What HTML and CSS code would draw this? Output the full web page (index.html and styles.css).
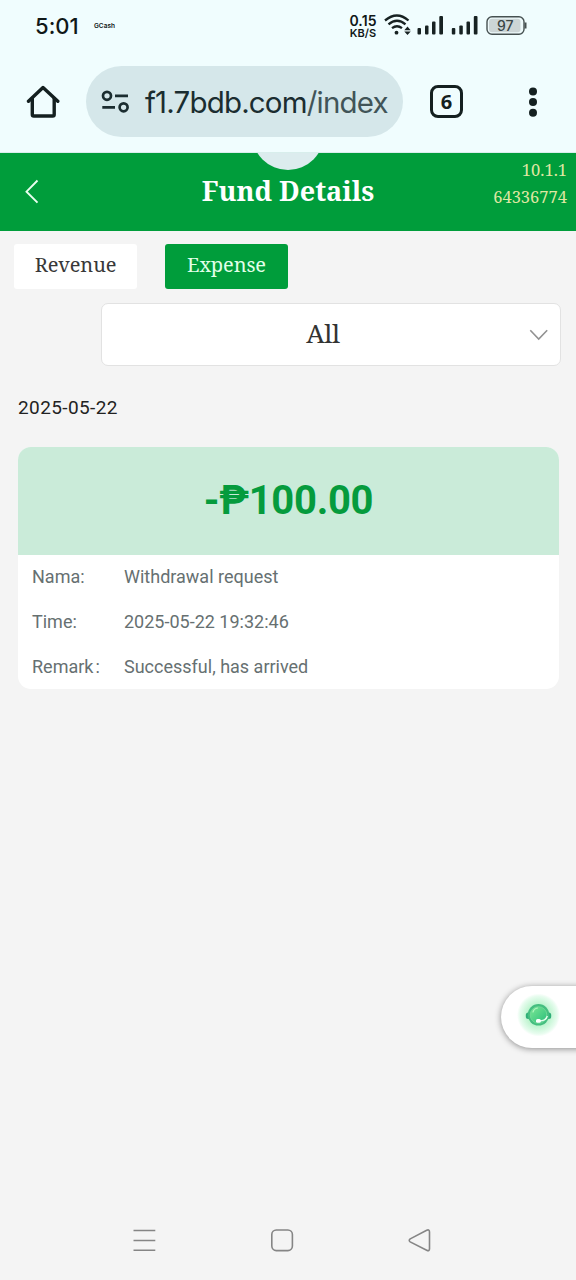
FILE: index.html
```html
<!DOCTYPE html>
<html lang="en">
<head>
<meta charset="utf-8">
<meta name="viewport" content="width=device-width, initial-scale=1">
<title>Fund Details</title>
<link rel="stylesheet" href="styles.css">
</head>
<body>
<div class="phone">
  <div class="status">
    <span class="clock">5:01</span>
    <span class="notice">GCash</span>
    <span class="rate"><span class="rate-num">0.15</span><span class="rate-unit">KB/S</span></span>
    <svg class="signals" width="146" height="30" viewBox="382 10 146 30">
      <g fill="none" stroke="#172222" stroke-width="2.3">
        <path d="M385 20.5Q397 10.500 408.500 20.500"/>
        <path d="M388.500 24.300Q397 17.200 405.500 24.300"/>
        <path d="M392 28.200Q397 24.400 402 28.200"/>
      </g>
      <circle cx="396.500" cy="32.700" r="1.900" fill="#172222"/>
      <path d="M404.300 30.200L407.500 26.600L410.700 30.200ZM404.300 31.500H410.700L407.500 35Z" fill="#172222"/>
      <g fill="#172222">
        <rect x="417.500" y="28" width="3.500" height="6.500" rx="1"/><rect x="425" y="25.500" width="3.500" height="9" rx="1"/><rect x="432" y="21.500" width="3.500" height="13" rx="1"/><rect x="439.300" y="16" width="3.700" height="18.500" rx="1"/>
        <rect x="451.800" y="28" width="3.500" height="6.500" rx="1"/><rect x="459.300" y="25.500" width="3.500" height="9" rx="1"/><rect x="466.500" y="21.500" width="3.500" height="13" rx="1"/><rect x="473.800" y="16" width="3.700" height="18.500" rx="1"/>
      </g>
      <rect x="487" y="16.700" width="37" height="17.600" rx="5" fill="#edf9fa" stroke="#465151" stroke-width="1.400"/>
      <rect x="489" y="18.700" width="31.500" height="13.600" rx="3" fill="#ccd5d6"/>
      <path d="M525.500 22.500v6" stroke="#465151" stroke-width="2"/>
      <text class="battery-text" x="505.200" y="30.600" text-anchor="middle">97</text>
    </svg>
  </div>

  <div class="toolbar">
    <svg class="home" width="34" height="34" viewBox="26 85 34 34" fill="none" stroke="#142020" stroke-width="3.400" stroke-linejoin="round" stroke-linecap="round">
      <path d="M28.500 101.300L43 87.500L57.800 101.300"/><path d="M32.300 98.500V114.500Q32.300 116 33.800 116H52.700Q54.200 116 54.200 114.500V98.500"/>
    </svg>
    <div class="address">
      <svg width="30" height="24" viewBox="101 90 30 24" fill="none" stroke="#1b2d30" stroke-width="2.700">
        <circle cx="107" cy="95.800" r="4"/><path d="M115 95.800H128M102.300 107.300H115"/><circle cx="123.600" cy="107.300" r="4"/>
      </svg>
      <span class="url">f1.7bdb.com<span class="path">/index</span></span>
    </div>
    <div class="tabs-count">6</div>
    <svg class="more" width="10" height="32" viewBox="0 0 10 32" fill="#142020"><circle cx="5" cy="5.400" r="4"/><circle cx="5" cy="16" r="4"/><circle cx="5" cy="26.700" r="4"/></svg>
  </div>

  <header class="header">
    <svg class="back" width="18" height="28" viewBox="22 178 18 28" fill="none" stroke="#e9fff0" stroke-width="1.900"><path d="M37.500 180.500L26.500 191.700L37.500 202.700"/></svg>
    <h1 class="title">Fund Details</h1>
    <div class="build"><span>10.1.1</span><span>64336774</span></div>
    <span class="pull"></span>
  </header>

  <main class="content">
    <div class="tabs">
      <div class="tab">Revenue</div>
      <div class="tab active">Expense</div>
    </div>
    <div class="select">
      <span>All</span>
      <svg class="caret" width="20" height="12" viewBox="0 0 20 12" fill="none" stroke="#929292" stroke-width="1.600"><path d="M1.300 1.200L9.700 10L18.200 1.200"/></svg>
    </div>
    <div class="date">2025-05-22</div>
    <section class="card">
      <div class="amount"><span>-₱100.00</span></div>
      <dl class="rows">
        <dt>Nama:</dt><dd>Withdrawal request</dd>
        <dt>Time:</dt><dd>2025-05-22 19:32:46</dd>
        <dt>Remark<span class="colon">:</span></dt><dd>Successful, has arrived</dd>
      </dl>
    </section>
  </main>

  <div class="support">
    <svg width="46" height="46" viewBox="0 0 46 46">
      <defs>
        <radialGradient id="halo"><stop offset="0" stop-color="#8eeab0"/><stop offset=".55" stop-color="#c2f5d2"/><stop offset=".88" stop-color="#e8fcef"/><stop offset="1" stop-color="#fff"/></radialGradient>
        <linearGradient id="face" x1="0" y1="0" x2="1" y2="1"><stop offset="0" stop-color="#7be895"/><stop offset="1" stop-color="#2bbd7b"/></linearGradient>
      </defs>
      <circle cx="23.500" cy="23" r="21.500" fill="url(#halo)"/>
      <rect x="10.800" y="20.500" width="5" height="6.500" rx="2.500" fill="#2fae78"/><rect x="31.200" y="20.500" width="5" height="6.500" rx="2.500" fill="#2fae78"/>
      <circle cx="23.500" cy="22.800" r="10.800" fill="#45be80"/>
      <circle cx="23.500" cy="23" r="8.300" fill="url(#face)" stroke="#75dc98" stroke-width=".8"/>
      <path d="M18 20Q19 16.500 22.500 16" fill="none" stroke="#b1f6be" stroke-width="1.200" stroke-linecap="round"/>
      <path d="M32.300 24Q31 28.800 24.300 29" fill="none" stroke="#eafff0" stroke-width="1.400"/><rect x="21" y="27" width="4.800" height="3.800" rx="1.500" fill="#fff"/>
    </svg>
  </div>

  <nav class="nav">
    <svg width="350" height="60" viewBox="110 1210 350 60" fill="none" stroke="#858585" stroke-width="1.600">
      <path d="M133.500 1230.500H155.300M133.500 1240.500H155.300M133.500 1250.300H155.300"/>
      <rect x="271.800" y="1230" width="20.600" height="20.600" rx="4.500"/>
      <path d="M410.200 1238.900L426.700 1230.200Q429.500 1229 429.500 1232V1248.700Q429.500 1251.600 426.700 1250.200L410.200 1241.900Q408.300 1240.400 410.200 1238.900Z"/>
    </svg>
  </nav>
</div>
</body>
</html>
```
FILE: styles.css
```css
* { box-sizing: border-box; }
body { margin: 0; background: #f4f4f4; font-family: Roboto, sans-serif; }
.phone { position: relative; width: 576px; height: 1280px; display: flex; flex-direction: column; overflow: hidden; background: #f4f4f4; }

.status { height: 52px; flex: none; display: flex; background: #f0fdfe; color: #101818; font-family: Inter, sans-serif; }
.clock { width: 44px; margin: 12px 0 0 35px; font-size: 22px; line-height: 28px; font-weight: 500; letter-spacing: .05px; white-space: nowrap; }
.notice { width: 30px; margin: 20px 0 0 15px; font-size: 6.5px; line-height: 12px; font-weight: 600; }
.rate { width: 34px; margin: 14px 0 0 222px; display: flex; flex-direction: column; align-items: center; font-weight: 600; }
.rate-num { font-size: 14px; line-height: 14px; letter-spacing: .1px; }
.rate-unit { font-size: 11px; line-height: 11px; letter-spacing: 0; }
.signals { margin: 10px 0 0 2px; }
.battery-text { font: 500 14px Inter, sans-serif; fill: #3b4646; }

.toolbar { height: 101px; flex: none; display: flex; align-items: center; padding: 0 38px 1px 26px; background: #f0fdfe; border-bottom: 1px solid #d8eeec; }
.address { width: 317px; height: 71px; margin-left: 26px; padding-left: 15px; display: flex; align-items: center; gap: 14px; border-radius: 36px; background: #d5e7ea; }
.url { font-family: Inter, sans-serif; font-size: 29.5px; line-height: 40px; letter-spacing: -.82px; color: #1b2d30; white-space: nowrap; }
.path { color: #415458; }
.tabs-count { width: 33px; height: 33px; margin-left: 27px; border: 3px solid #142020; border-radius: 8px; font: 700 20px/28px "Open Sans", sans-serif; text-align: center; color: #142020; }
.more { margin-left: auto; }

.header { position: relative; height: 78px; flex: none; display: grid; grid-template-columns: 120px 1fr 120px; background: #009d3b; font-family: "Noto Serif", "Droid Serif", "DejaVu Serif Condensed", "DejaVu Serif", serif; overflow: hidden; }
.back { margin: 25px 0 0 22px; }
.title { margin: 20px 0 0; font-size: 27px; line-height: 36px; font-weight: 700; text-align: center; color: #fff; white-space: nowrap; }
.build { display: flex; flex-direction: column; align-items: flex-end; padding: 3px 9px 0 0; font-size: 16.5px; line-height: 27px; color: #dfe6a2; }
.pull { position: absolute; left: 252px; top: -55px; width: 72px; height: 72px; border-radius: 50%; background: #dcecee; }

.content { padding: 13px 17px 0 14px; }
.tabs { display: flex; gap: 28px; font-family: "Noto Serif", "Droid Serif", "DejaVu Serif Condensed", "DejaVu Serif", serif; }
.tab { width: 123px; height: 45px; border-radius: 3px; background: #fff; color: #383838; font-size: 20px; line-height: 42px; letter-spacing: -.1px; text-align: center; }
.active { background: #009d3b; color: #e2ffe9; }
.select { position: relative; height: 63px; margin: 14px -2px 0 87px; padding-right: 16px; display: flex; align-items: center; justify-content: center; border: 1px solid #e2e2e2; border-radius: 7px; background: #fff; color: #333; font: 26px/60px "Noto Serif", "Droid Serif", "DejaVu Serif Condensed", "DejaVu Serif", serif; letter-spacing: -.4px; }
.select span { margin-top: -3px; }
.caret { position: absolute; right: 11px; top: 25px; }
.date { margin: 28px 0 0 4px; font-size: 19px; line-height: 28px; letter-spacing: .4px; color: #222; }
.card { width: 541px; margin: 25px 0 0 4px; border-radius: 13px; overflow: hidden; background: #fff; }
.amount { height: 108px; background: #caebd9; text-align: center; color: #059b3d; font-size: 40px; line-height: 107px; font-weight: 700; letter-spacing: -.3px; }
.rows { height: 134px; margin: 0; padding-left: 14px; display: grid; grid-template-columns: 92px 1fr; grid-auto-rows: 45px; font-size: 18px; line-height: 44px; color: #667071; white-space: nowrap; }
.rows dd { margin: 0; }
.colon { margin-left: 2px; }

.support { position: absolute; right: -12px; top: 986px; width: 87px; height: 62px; padding: 6px 0 0 14px; border-radius: 31px 0 0 31px; background: #fff; box-shadow: 0 1px 6px rgba(0,0,0,.42); }
.nav { margin-top: auto; height: 70px; padding-left: 110px; }
```
